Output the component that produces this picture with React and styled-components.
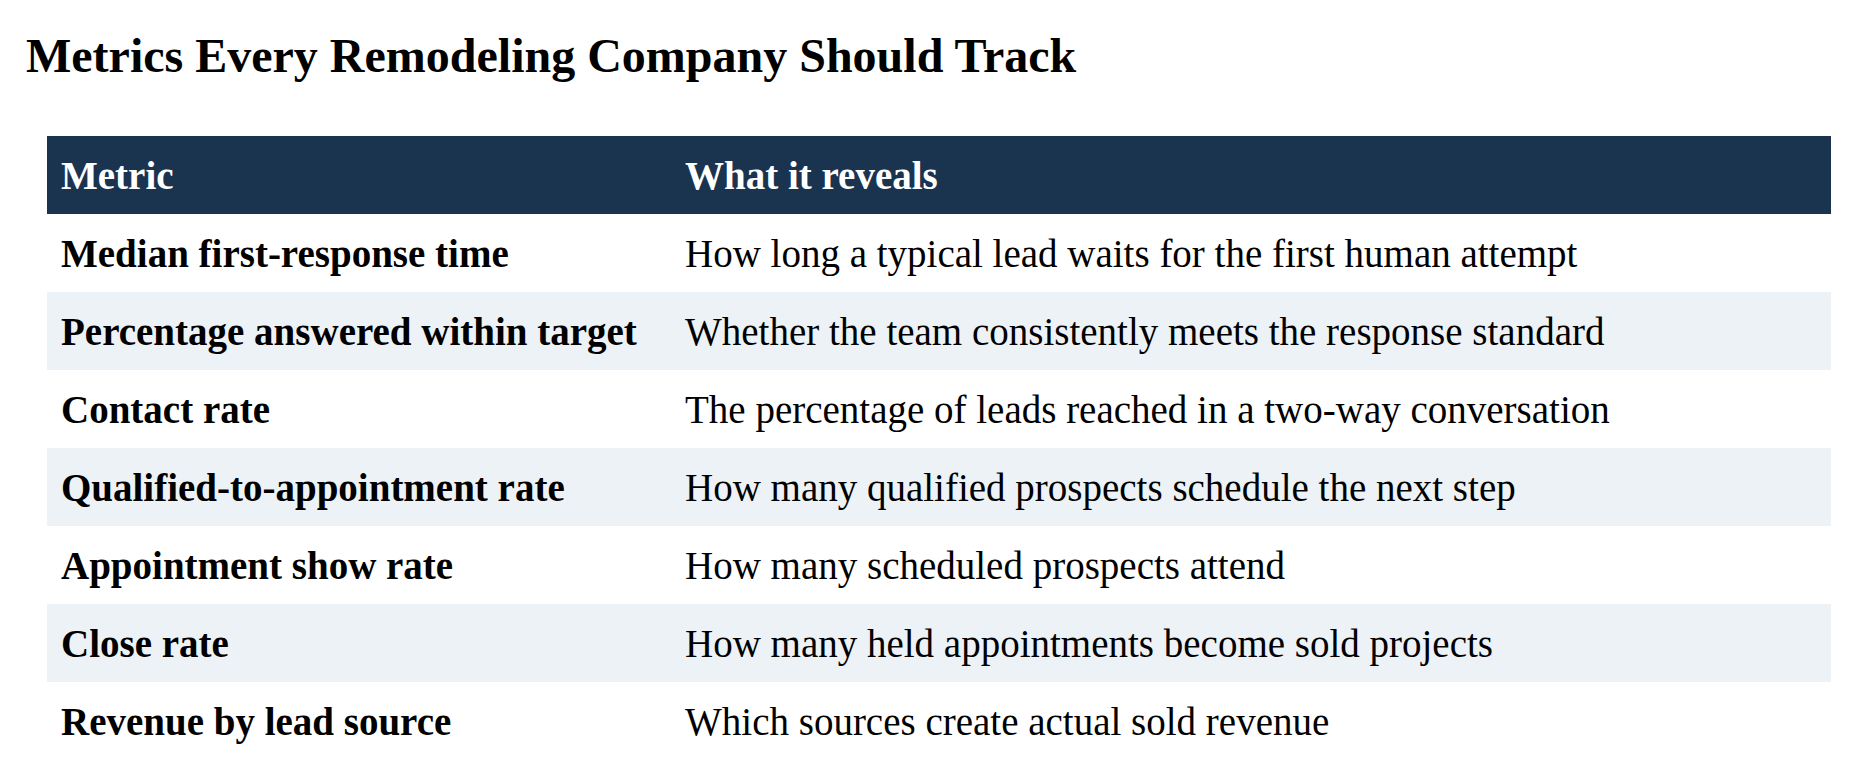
import styled, { createGlobalStyle } from 'styled-components';

const GlobalStyle = createGlobalStyle`
  html, body {
    margin: 0;
    padding: 0;
    background: #ffffff;
  }
  body {
    font-family: "Liberation Serif", "Times New Roman", serif;
    color: #000000;
  }
`;

const Page = styled.main`
  padding: 20px 31px 0 26px;
`;

const Title = styled.h2`
  margin: 0 0 44px;
  font-size: 48px;
  font-weight: 700;
  line-height: 72px;
`;

const Table = styled.table`
  width: calc(100% - 21px);
  margin-left: 21px;
  border-collapse: collapse;
  font-size: 39px;
`;

const HeadCell = styled.th`
  background: #1a334f;
  color: #ffffff;
  text-align: left;
  font-weight: 700;
  height: 78px;
  padding: 0 14px;
  width: ${p => p.$width || 'auto'};
`;

const Row = styled.tr`
  background: ${p => (p.$striped ? '#edf2f7' : '#ffffff')};
`;

const Cell = styled.td`
  height: 78px;
  padding: 0 14px;
  font-weight: ${p => (p.$bold ? 700 : 400)};
`;

const metrics = [
  ['Median first-response time', 'How long a typical lead waits for the first human attempt'],
  ['Percentage answered within target', 'Whether the team consistently meets the response standard'],
  ['Contact rate', 'The percentage of leads reached in a two-way conversation'],
  ['Qualified-to-appointment rate', 'How many qualified prospects schedule the next step'],
  ['Appointment show rate', 'How many scheduled prospects attend'],
  ['Close rate', 'How many held appointments become sold projects'],
  ['Revenue by lead source', 'Which sources create actual sold revenue'],
];

export default function App() {
  return (
    <>
      <GlobalStyle />
      <Page>
        <Title>Metrics Every Remodeling Company Should Track</Title>
        <Table>
          <thead>
            <tr>
              <HeadCell $width="596px">Metric</HeadCell>
              <HeadCell>What it reveals</HeadCell>
            </tr>
          </thead>
          <tbody>
            {metrics.map(([metric, reveals], i) => (
              <Row key={metric} $striped={i % 2 === 1}>
                <Cell $bold>{metric}</Cell>
                <Cell>{reveals}</Cell>
              </Row>
            ))}
          </tbody>
        </Table>
      </Page>
    </>
  );
}
